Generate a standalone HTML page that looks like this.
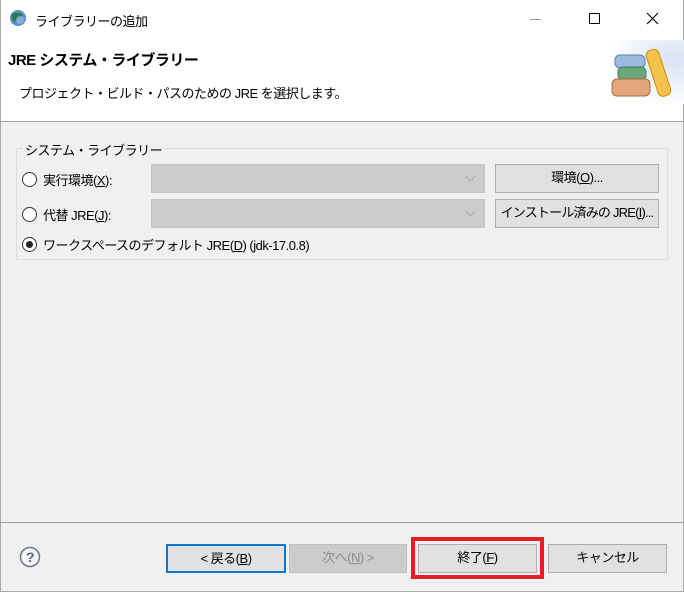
<!DOCTYPE html>
<html><head><meta charset="utf-8"><style>
*{box-sizing:border-box;margin:0;padding:0}
body{width:684px;height:592px;overflow:hidden;background:#f0f0f0;font-family:"Liberation Sans","Noto Sans CJK JP",sans-serif;font-size:13px;color:#000;position:relative;letter-spacing:-0.5px}
.a{position:absolute;white-space:nowrap}
.btn{position:absolute;background:#e1e1e1;border:1px solid #adadad;text-align:center;font-size:13px;line-height:26px;white-space:nowrap;overflow:hidden}
.combo{position:absolute;background:#cccccc;border:1px solid #c4c4c4}
.combo:after{content:"";position:absolute;right:10px;top:8px;width:6px;height:6px;border-right:1px solid #aaa;border-bottom:1px solid #aaa;transform:rotate(45deg)}
.radio{position:absolute;width:15px;height:15px;border:1px solid #333;border-radius:50%;background:#fff}
</style></head><body>
<div class="a" style="left:0;top:0;width:684px;height:121px;background:#fff"></div>
<div class="a" style="left:0;top:121px;width:684px;height:1px;background:#a0a0a0"></div>
<div class="a" style="left:0;top:0;width:1px;height:592px;background:#aaa"></div>
<div class="a" style="right:0;top:0;width:1px;height:592px;background:#aaa"></div>
<div class="a" style="left:0;bottom:0;width:684px;height:1px;background:#aaa"></div>
<svg class="a" style="left:9px;top:9px" width="18" height="18"><circle cx="9" cy="9" r="8" fill="#5b8ec4"/><path d="M3 5 Q9 2 14 6 Q10 9 5 13 Q2 9 3 5Z" fill="#2d7a4a"/><circle cx="11" cy="11" r="4" fill="#9cc3e8" opacity=".6"/></svg>
<div class="a" style="left:35px;top:11px;font-size:13px">ライブラリーの追加</div>
<div class="a" style="left:530px;top:19px;width:11px;height:1px;background:#999"></div>
<div class="a" style="left:589px;top:13px;width:11px;height:11px;border:1px solid #000"></div>
<svg class="a" style="left:646px;top:12px" width="13" height="13"><path d="M1 1L12 12M12 1L1 12" stroke="#000" stroke-width="1.1"/></svg>
<div class="a" style="left:8px;top:49px;font-size:15px;font-weight:bold">JRE システム・ライブラリー</div>
<div class="a" style="left:19px;top:83px;font-size:13px">プロジェクト・ビルド・パスのための JRE を選択します。</div>
<div class="a" style="left:610px;top:40px;width:74px;height:64px;background:radial-gradient(ellipse at 90% 30%,#d8e2f4,#fff 75%)"></div>
<svg class="a" style="left:610px;top:46px" width="66" height="58">
<rect x="5" y="9" width="30" height="13" rx="5" fill="#9cb9e0" stroke="#5a7fb0"/>
<rect x="8" y="21" width="28" height="13" rx="5" fill="#6aa77c" stroke="#3e7a50"/>
<rect x="2" y="33" width="38" height="17" rx="5" fill="#e2a57c" stroke="#a86a3c"/>
<rect x="42" y="3" width="13" height="48" rx="5" fill="#f3c24a" stroke="#c98f10" transform="rotate(-18 48 27)"/>
</svg>
<div class="a" style="left:16px;top:148px;width:652px;height:112px;border:1px solid #dcdcdc"></div>
<div class="a" style="left:22px;top:140px;padding:0 3px;background:#f0f0f0">システム・ライブラリー</div>
<div class="radio" style="left:22px;top:172px"></div>
<div class="a" style="left:43px;top:170px">実行環境(<u>X</u>):</div>
<div class="combo" style="left:151px;top:164px;width:334px;height:29px"></div>
<div class="btn" style="left:495px;top:164px;width:164px;height:29px">環境(<u>O</u>)...</div>
<div class="radio" style="left:22px;top:207px"></div>
<div class="a" style="left:43px;top:205px">代替 JRE(<u>J</u>):</div>
<div class="combo" style="left:151px;top:199px;width:334px;height:29px"></div>
<div class="btn" style="left:495px;top:199px;width:164px;height:29px;letter-spacing:-0.8px">インストール済みの JRE(<u>I</u>)...</div>
<div class="radio" style="left:22px;top:237px"><div style="position:absolute;left:3px;top:3px;width:7px;height:7px;border-radius:50%;background:#222"></div></div>
<div class="a" style="left:43px;top:235px">ワークスペースのデフォルト JRE(<u>D</u>) (jdk-17.0.8)</div>
<div class="a" style="left:0;top:522px;width:684px;height:1px;background:#a0a0a0"></div>
<svg class="a" style="left:19px;top:546px" width="22" height="22"><circle cx="11" cy="11" r="9.5" fill="#f4f4f8" stroke="#6a7590" stroke-width="1.5"/><text x="11" y="16" text-anchor="middle" font-size="14" font-weight="bold" fill="#5a6580" font-family="Liberation Sans">?</text></svg>
<div class="btn" style="left:166px;top:544px;width:120px;height:29px;border:2px solid #0078d7;line-height:25px">&lt; 戻る(<u>B</u>)</div>
<div class="btn" style="left:289px;top:544px;width:118px;height:29px;background:#cccccc;border-color:#bfbfbf;color:#8c8c8c">次へ(<u>N</u>) &gt;</div>
<div class="a" style="left:411px;top:537px;width:133px;height:42px;border:4px solid #e81c24"></div>
<div class="btn" style="left:418px;top:544px;width:119px;height:29px">終了(<u>F</u>)</div>
<div class="btn" style="left:548px;top:544px;width:119px;height:29px">キャンセル</div>
</body></html>
